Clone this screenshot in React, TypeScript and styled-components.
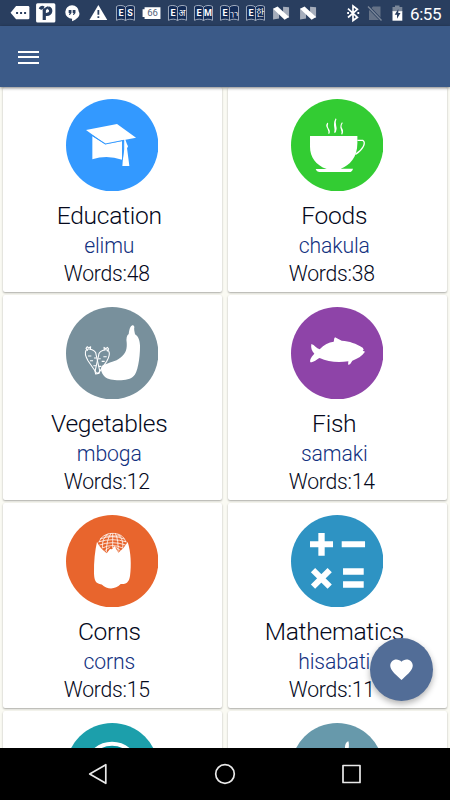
import React from "react";
import styled, { createGlobalStyle } from "styled-components";

const GlobalStyle = createGlobalStyle`
  * { box-sizing: border-box; }
  body { margin: 0; background: #000; font-family: Roboto, "Noto Sans", sans-serif; }
`;

const Screen = styled.div`
  position: relative;
  display: flex;
  flex-direction: column;
  width: 450px;
  height: 800px;
  overflow: hidden;
  background: #fafaf3;
`;

const StatusBar = styled.header`
  display: flex;
  flex: none;
  align-items: center;
  justify-content: space-between;
  height: 26px;
  padding: 0 8px 0 7px;
  background: #293e5f;
  color: #fff;
`;

const Notifications = styled.div`
  display: flex;
`;

const StatusGlyph = styled.svg<{ $w?: number }>`
  display: block;
  width: ${(p) => p.$w ?? 26.15}px;
  height: 26px;
  fill: #fff;
  font-family: Roboto, "Noto Sans", "DejaVu Sans", "Noto Sans CJK KR", sans-serif;
`;

const SystemIcons = styled.div`
  display: flex;
  align-items: center;
`;

const Clock = styled.time`
  width: 32px;
  margin-left: 2px;
  font-size: 17px;
  line-height: 26px;
  letter-spacing: -0.4px;
  white-space: nowrap;
  padding-top: 1px;
`;

const AppBar = styled.div`
  position: relative;
  z-index: 1;
  display: flex;
  flex: none;
  align-items: center;
  height: 61px;
  padding: 0 18px;
  background: #3b5a88;
  box-shadow: 0 1px 3px rgba(0, 0, 0, 0.5);
`;

const MenuButton = styled.button`
  display: flex;
  flex-direction: column;
  gap: 3.5px;
  width: 21px;
  padding: 0;
  margin-top: 1px;
  border: 0;
  background: none;
`;

const MenuLine = styled.span`
  height: 2px;
  background: #fff;
`;

const Content = styled.main`
  flex: 1;
  min-height: 0;
  overflow: hidden;
`;

const CategoryGrid = styled.div`
  display: grid;
  grid-template-columns: 218.5px 218.5px;
  grid-auto-rows: 205px;
  gap: 3px 6.5px;
  padding: 0 3px;
`;

const Card = styled.article`
  display: flex;
  flex-direction: column;
  align-items: center;
  padding-top: 12px;
  border-radius: 2px;
  background: #fff;
  box-shadow: 0 1px 2px rgba(0, 0, 0, 0.32);
`;

const Picture = styled.svg`
  display: block;
  flex: none;
  width: 92.4px;
  height: 92.4px;
  overflow: hidden;
`;

const Labels = styled.div`
  display: flex;
  flex-direction: column;
  align-items: center;
  margin-right: 6px;
  font-family: "Roboto Light", Roboto, sans-serif;
  font-weight: 300;
  white-space: nowrap;
`;

const Title = styled.h2`
  margin: 9px 0 0;
  font-size: 24.6px;
  font-weight: 300;
  line-height: 32px;
  letter-spacing: -0.27px;
  color: #05091c;
`;

const Translation = styled.div`
  font-size: 21.2px;
  line-height: 28px;
  letter-spacing: -0.15px;
  color: #123180;
`;

const WordCount = styled.div`
  margin-right: 5px;
  font-size: 21.2px;
  line-height: 28px;
  letter-spacing: -0.25px;
  color: #05091c;
`;

const FavoriteButton = styled.button`
  position: absolute;
  z-index: 2;
  left: 370px;
  top: 638px;
  display: flex;
  align-items: center;
  justify-content: center;
  width: 63px;
  height: 63px;
  padding: 0;
  border: 0;
  border-radius: 50%;
  background: #526d97;
  box-shadow: 0 3px 6px rgba(0, 0, 0, 0.3);
`;

const NavBar = styled.nav`
  display: flex;
  flex: none;
  align-items: center;
  justify-content: center;
  gap: 99px;
  height: 52px;
  background: #000;
`;

const NavIcon = styled.svg`
  width: 28px;
  height: 28px;
  fill: none;
  stroke: #e9e9e9;
  stroke-width: 1.7;
  stroke-linejoin: round;
`;

const Book = ({ left, right }: { left: string; right: string }) => (
  <StatusGlyph viewBox="0 0 26 26">
    <path
      d="M13.4 7.2C11.5 5 6 5 4.4 6.5V20.3C7 18.8 11.5 18.8 13.4 20.5C15.3 18.8 20 18.8 22.4 20.3V6.5C20.6 5 15.3 5 13.4 7.2ZM13.4 7.2V20.5"
      fill="#142c57"
      stroke="#aeb8c7"
      strokeWidth="0.9"
    />
    <text x="8.9" y="16" fontSize="9" fontWeight="700" textAnchor="middle">{left}</text>
    <text
      x="18"
      y="16"
      fontSize={right.length > 1 ? 7.5 : 9}
      fontWeight={right.charCodeAt(0) < 128 ? 700 : 400}
      textAnchor="middle"
    >
      {right}
    </text>
  </StatusGlyph>
);

const Nougat = () => (
  <StatusGlyph viewBox="0 0 26 26">
    <path d="M5 8.5L11 11V18.5L5 19.5ZM15 6.7L21 7.3V18L15 15Z" fill="#a5adbb" />
    <path d="M5 8.8L9.5 6.5L21 17L16.5 19.7Z" />
  </StatusGlyph>
);

const Carrot = () => (
  <g fill="none" stroke="#fff" strokeWidth="3.2" strokeLinejoin="round">
    <path d="M258 180C253 189 258 201 264 211L289 247L297 249L299 241L288 192C288 180 266 171 258 180Z" />
    <path d="M263 181L258 174L262 169L266 173L272 169L271 178M264 197H274M270 211H279M282 203H289M280 226H288" />
  </g>
);

type Category = {
  name: string;
  swahili?: string;
  words?: number;
  color: string;
  top: number;
  art: React.ReactNode;
};

const categories: Category[] = [
  {
    name: "Education",
    swahili: "elimu",
    words: 48,
    color: "#3399ff",
    top: 221,
    art: (
      <>
        <path d="M258 314L351 296L408 337L376 343L381 357L384 363L381 369L388 422H367L371 369L370 361L372 345L317 357Z" />
        <path d="M277 332L316 357L366 347V403Q320 388 277 402Z" />
        <path d="M277 331L316 356L371 345V372L367 403" fill="none" stroke="#3399ff" strokeWidth="3" />
      </>
    ),
  },
  {
    name: "Foods",
    swahili: "chakula",
    words: 38,
    color: "#33cc33",
    top: 57,
    art: (
      <>
        <path d="M255 168H397V190C397 232 374 257 347 266H384Q381 276 373 276H284Q275 276 272 267H305C272 255 255 231 255 200Z" />
        <path d="M397 181H413C425 187 413 210 391 223" fill="none" stroke="#fff" strokeWidth="4" />
        <path d="M308 129C297 144 320 146 311 161C316 148 301 145 308 129ZM333 116C324 134 341 141 329 158C334 142 322 134 333 116ZM352 128C338 145 361 147 350 163C357 151 339 145 352 128Z" stroke="#fff" strokeWidth="3" />
      </>
    ),
  },
  {
    name: "Vegetables",
    swahili: "mboga",
    words: 12,
    color: "#78909c",
    top: 50,
    art: (
      <>
        <path d="M386 131C388 117 390 106 399 104L403 109C401 117 404 125 405 132C416 139 419 151 420 166C420 207 412 247 401 257C387 274 331 273 315 260C301 246 300 232 308 225C328 215 347 214 361 202C379 188 381 174 380 157Q377 137 386 131Z" />
        <Carrot />
        <g transform="translate(584 2) scale(-1 1)"><Carrot /></g>
      </>
    ),
  },
  {
    name: "Fish",
    swahili: "samaki",
    words: 14,
    color: "#8e44a8",
    top: 50,
    art: (
      <path d="M284 177C297 163 311 155 326 154C328 149 326 145 330 141L350 151C374 152 393 160 413 172L416 178L413 181L420 184C411 197 397 205 382 211L375 222L369 223L370 213C339 217 308 215 284 203C274 207 268 216 256 216C253 207 261 198 268 190C260 182 257 172 259 161C269 164 274 174 284 177Z" />
    ),
  },
  {
    name: "Corns",
    swahili: "corns",
    words: 15,
    color: "#e8652d",
    top: 44,
    art: (
      <>
        <path d="M291 124Q298 141 320 159L330 146L336 147L343 137L355 157Q373 143 383 125C393 156 394 195 390 226C387 248 376 252 362 251Q349 264 333 264Q318 264 305 252C286 250 283 239 282 220C281 183 285 151 291 124Z" />
        <g fill="none" stroke="#fff" strokeWidth="2.3">
          <path d="M298 125C304 93 368 88 377 125M300 116Q337 102 373 116M295 125Q337 111 380 125M298 134Q337 120 377 134M307 143Q337 128 368 143M314 151L329 141M344 139L361 150" />
          <path d="M324 100Q305 115 307 143M333 99Q319 118 319 156M338 99V143M346 99Q356 119 354 156M354 102Q372 117 368 144M315 107H362" />
        </g>
      </>
    ),
  },
  {
    name: "Mathematics",
    swahili: "hisabati",
    words: 11,
    color: "#2e93c3",
    top: 44,
    art: (
      <>
        <path d="M280 98H299V123H324V141H299V166H280V141H255V123H280ZM350 123H420V141H350ZM354 204H416V223H354ZM354 243H416V262H354Z" />
        <path d="M264 209L314 259M314 209L264 259" stroke="#fff" strokeWidth="18" />
      </>
    ),
  },
  {
    name: "",
    color: "#1c9fab",
    top: 67,
    art: <circle cx="336" cy="205" r="76" fill="#078f9d" stroke="#fff" strokeWidth="12" />,
  },
  {
    name: "",
    color: "#6799ab",
    top: 67,
    art: <path d="M370 122C358 126 357 143 365 163C372 147 373 130 370 122Z" />,
  },
];

const CategoryCard = ({ item }: { item: Category }) => (
  <Card>
    <Picture viewBox="0 0 277 277" fill="#fff">
      <circle cx="138.5" cy="138.5" r="138.5" fill={item.color} />
      <g transform={`translate(-198 ${-item.top})`}>{item.art}</g>
    </Picture>
    {item.name && (
      <Labels>
        <Title>{item.name}</Title>
        <Translation>{item.swahili}</Translation>
        <WordCount>Words:{item.words}</WordCount>
      </Labels>
    )}
  </Card>
);

export default function App() {
  return (
    <Screen>
      <GlobalStyle />
      <StatusBar>
        <Notifications>
          <StatusGlyph viewBox="0 0 26 26">
            <path d="M9 6H21Q22.3 6 22.3 7.3V18Q22.3 19.3 21 19.3H9L3.5 12.7Z" />
            <path d="M9 12h2v2H9zM13 12h2v2h-2zM17 12h2v2h-2z" fill="#293e5f" />
          </StatusGlyph>
          <StatusGlyph viewBox="0 0 26 26">
            <rect x="3" y="3.3" width="19.3" height="19.3" rx="1.5" />
            <path d="M7 9.2Q8.5 6.5 10.7 8M11.2 20V8.6M15 7.8C19 9 18.5 14.5 13.5 14.4M11.2 14.5H14" fill="none" stroke="#293e5f" strokeWidth="3.2" />
            <path d="M10 11C12 10.5 12.5 7.5 15 7.3" fill="none" stroke="#293e5f" strokeWidth="2.2" />
          </StatusGlyph>
          <StatusGlyph viewBox="0 0 26 26">
            <path d="M13 5.2A6.8 6.8 0 1 1 13 18.8V21.3C3 17 6 12 6.2 12A6.8 6.8 0 0 1 13 5.2Z" transform="matrix(-1 0 0 1 26 0)" />
            <path d="M9.6 10h2.8v3l-1.6 2h-.9l.7-2h-1zM13.6 10h2.8v3l-1.6 2h-.9l.7-2h-1z" fill="#293e5f" />
          </StatusGlyph>
          <StatusGlyph viewBox="0 0 26 26">
            <path d="M13.3 5L22.2 20H4.4Z" />
            <path d="M12.4 10h1.8v4.8h-1.8zM12.4 16.2h1.8V18h-1.8z" fill="#293e5f" />
          </StatusGlyph>
          <Book left="E" right="S" />
          <StatusGlyph viewBox="0 0 26 26">
            <path d="M6.5 7.3H22.4V19H6.5V17H4.5V9.3H6.5Z" />
            <text x="14.5" y="16.4" fontSize="9.5" textAnchor="middle" fill="#55637b">66</text>
          </StatusGlyph>
          <Book left="E" right="अ" />
          <Book left="E" right="M" />
          <Book left="E" right="רך" />
          <Book left="E" right="한" />
          <Nougat />
          <Nougat />
        </Notifications>
        <SystemIcons>
          <StatusGlyph $w={22} viewBox="0 0 22 26">
            <path d="M6 8.7L15.4 17.3L11 20.5V6L15.4 9.3L6 17.5" fill="none" stroke="#fff" strokeWidth="1.7" />
            <path d="M5.2 12h1.8v2H5.2zM15.4 12h1.8v2h-1.8z" />
          </StatusGlyph>
          <StatusGlyph $w={22} viewBox="0 0 22 26">
            <path d="M9 6.5H16.5V20H5V10.5Z" fill="#657287" />
            <path d="M4 6.5L17.5 20.5" stroke="#293e5f" strokeWidth="3" />
            <path d="M4 6.5L17.5 20.5" stroke="#7b8799" strokeWidth="1.4" />
          </StatusGlyph>
          <StatusGlyph $w={22} viewBox="0 0 22 26">
            <path d="M6.5 7H9V5.5H13.5V7H16.3V12H6.5Z" fill="#7b8799" />
            <path d="M6.5 11.2H16.3V20.7H6.5Z" />
            <path d="M12.3 9L8.7 14.7H11V18.7L14.5 13H12.3Z" fill="#293e5f" />
          </StatusGlyph>
          <Clock>6:55</Clock>
        </SystemIcons>
      </StatusBar>
      <AppBar>
        <MenuButton aria-label="Menu">
          <MenuLine />
          <MenuLine />
          <MenuLine />
        </MenuButton>
      </AppBar>
      <Content>
        <CategoryGrid>
          {categories.map((item, index) => (
            <CategoryCard key={index} item={item} />
          ))}
        </CategoryGrid>
      </Content>
      <NavBar>
        <NavIcon viewBox="-1.5 0 28 28">
          <path d="M4.2 14L20.3 4.7V23.3Z" />
        </NavIcon>
        <NavIcon viewBox="0 0 28 28">
          <circle cx="14" cy="14" r="9.3" />
        </NavIcon>
        <NavIcon viewBox="0 0 28 28">
          <rect x="5" y="5.5" width="17" height="17" />
        </NavIcon>
      </NavBar>
      <FavoriteButton aria-label="Favorites">
        <svg width="27" height="27" viewBox="0 0 24 24" fill="#fff">
          <path d="M12 21.35l-1.45-1.32C5.4 15.36 2 12.28 2 8.5 2 5.42 4.42 3 7.5 3c1.74 0 3.41.81 4.5 2.09C13.09 3.81 14.76 3 16.5 3 19.58 3 22 5.42 22 8.5c0 3.78-3.4 6.86-8.55 11.54L12 21.35z" />
        </svg>
      </FavoriteButton>
    </Screen>
  );
}
